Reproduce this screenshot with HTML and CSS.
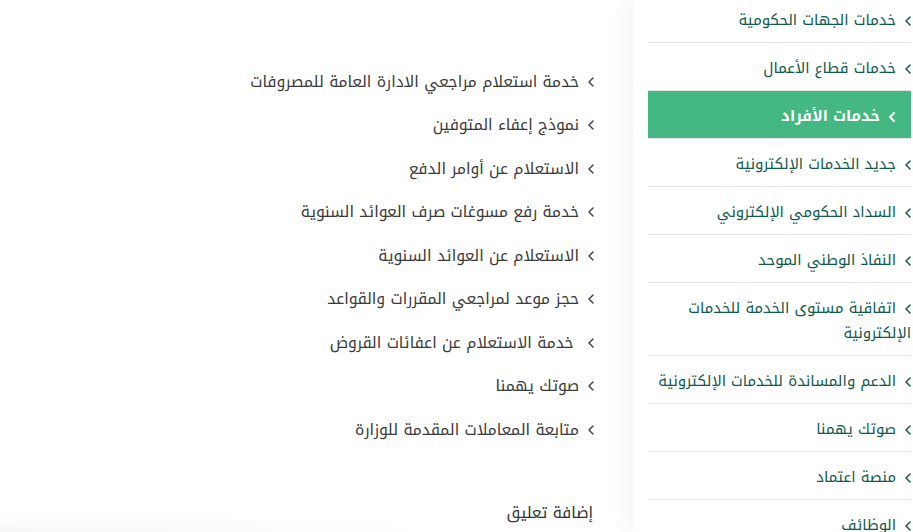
FILE: index.html
```html
<!DOCTYPE html>
<html lang="ar" dir="rtl">
<head>
<meta charset="utf-8">
<title>خدمات الأفراد</title>
<link rel="stylesheet" href="styles.css">
</head>
<body>
<div class="page">
  <aside class="sidebar">
    <ul class="side-menu">
      <li class="side-item"><svg class="chev" viewBox="0 0 6 10"><polyline points="5,1 1,5 5,9"/></svg>خدمات الجهات الحكومية</li>
      <li class="side-item"><svg class="chev" viewBox="0 0 6 10"><polyline points="5,1 1,5 5,9"/></svg>خدمات قطاع الأعمال</li>
      <li class="side-item active"><svg class="chev" viewBox="0 0 6 10"><polyline points="5,1 1,5 5,9"/></svg>خدمات الأفراد</li>
      <li class="side-item"><svg class="chev" viewBox="0 0 6 10"><polyline points="5,1 1,5 5,9"/></svg>جديد الخدمات الإلكترونية</li>
      <li class="side-item"><svg class="chev" viewBox="0 0 6 10"><polyline points="5,1 1,5 5,9"/></svg>السداد الحكومي الإلكتروني</li>
      <li class="side-item"><svg class="chev" viewBox="0 0 6 10"><polyline points="5,1 1,5 5,9"/></svg>النفاذ الوطني الموحد</li>
      <li class="side-item"><svg class="chev" viewBox="0 0 6 10"><polyline points="5,1 1,5 5,9"/></svg>اتفاقية مستوى الخدمة للخدمات الإلكترونية</li>
      <li class="side-item single"><svg class="chev" viewBox="0 0 6 10"><polyline points="5,1 1,5 5,9"/></svg>الدعم والمساندة للخدمات الإلكترونية</li>
      <li class="side-item"><svg class="chev" viewBox="0 0 6 10"><polyline points="5,1 1,5 5,9"/></svg>صوتك يهمنا</li>
      <li class="side-item"><svg class="chev" viewBox="0 0 6 10"><polyline points="5,1 1,5 5,9"/></svg>منصة اعتماد</li>
      <li class="side-item"><svg class="chev" viewBox="0 0 6 10"><polyline points="5,1 1,5 5,9"/></svg>الوظائف</li>
    </ul>
  </aside>
  <main class="content">
    <ul class="links">
      <li class="link-item"><svg class="chev" viewBox="0 0 6 10"><polyline points="5,1 1,5 5,9"/></svg><span>خدمة استعلام مراجعي الادارة العامة للمصروفات</span></li>
      <li class="link-item"><svg class="chev" viewBox="0 0 6 10"><polyline points="5,1 1,5 5,9"/></svg><span>نموذج إعفاء المتوفين</span></li>
      <li class="link-item"><svg class="chev" viewBox="0 0 6 10"><polyline points="5,1 1,5 5,9"/></svg><span>الاستعلام عن أوامر الدفع</span></li>
      <li class="link-item"><svg class="chev" viewBox="0 0 6 10"><polyline points="5,1 1,5 5,9"/></svg><span>خدمة رفع مسوغات صرف العوائد السنوية</span></li>
      <li class="link-item"><svg class="chev" viewBox="0 0 6 10"><polyline points="5,1 1,5 5,9"/></svg><span>الاستعلام عن العوائد السنوية</span></li>
      <li class="link-item"><svg class="chev" viewBox="0 0 6 10"><polyline points="5,1 1,5 5,9"/></svg><span>حجز موعد لمراجعي المقررات والقواعد</span></li>
      <li class="link-item"><svg class="chev" viewBox="0 0 6 10"><polyline points="5,1 1,5 5,9"/></svg><span>&nbsp;خدمة الاستعلام عن اعفائات القروض</span></li>
      <li class="link-item"><svg class="chev" viewBox="0 0 6 10"><polyline points="5,1 1,5 5,9"/></svg><span>صوتك يهمنا</span></li>
      <li class="link-item"><svg class="chev" viewBox="0 0 6 10"><polyline points="5,1 1,5 5,9"/></svg><span>متابعة المعاملات المقدمة للوزارة</span></li>
    </ul>
    <div class="comment">إضافة تعليق</div>
  </main>
</div>
</body>
</html>
```

FILE: styles.css
```css
* { box-sizing: border-box; }
html, body {
  margin: 0;
  padding: 0;
  background: #fff;
  overflow: hidden;
}
body {
  width: 913px;
  height: 532px;
  font-family: "Noto Kufi Arabic", "Droid Arabic Kufi", "DejaVu Sans", "Noto Sans", sans-serif;
  font-size: 15.7px;
}
.page {
  display: flex;
  flex-direction: row;
  height: 532px;
  overflow: hidden;
}
.sidebar {
  width: 280px;
  flex: 0 0 280px;
  padding: 0 2px 0 15px;
  background: #fff;
  box-shadow: -6px 0 22px rgba(0, 0, 0, 0.05);
  position: relative;
  z-index: 1;
}
.side-menu {
  list-style: none;
  margin: -5px 0 0 0;
  padding: 0;
}
.side-item {
  display: block;
  padding: 13px 0 9px 0;
  line-height: 25px;
  font-size: 15px;
  color: #0f5a4d;
  border-bottom: 1px solid #e4e4e4;
}
.side-item.single { white-space: nowrap; }
.side-item .chev {
  display: inline-block;
  width: 6px;
  height: 10px;
  margin-left: 9px;
  vertical-align: -1px;
  stroke: #0f5a4d;
}
.side-item.active {
  background: #43b883;
  color: #fff;
  font-weight: bold;
  padding-right: 16px;
}
.side-item.active .chev { stroke: #fff; stroke-width: 2; }
.chev {
  fill: none;
  stroke-width: 1.5;
  stroke-linecap: round;
  stroke-linejoin: round;
}
.content {
  flex: 1 1 auto;
  padding: 60px 39px 0 0;
  display: flex;
  flex-direction: column;
}
.links {
  list-style: none;
  margin: 0;
  padding: 0;
}
.link-item {
  display: flex;
  align-items: center;
  gap: 9px;
  padding: 9.75px 0;
  line-height: 24px;
  color: #3a3a3a;
}
.link-item .chev {
  flex: 0 0 6px;
  width: 6px;
  height: 10px;
  stroke: #444;
}
.comment {
  margin-top: 39px;
  padding: 10px 1px 20px 0;
  line-height: 24px;
  color: #333;
  background:
    linear-gradient(to right, rgba(255, 255, 255, 0) 0%, #fff 75%),
    linear-gradient(to bottom, #fff 0%, #fff 40%, #f1f1f1 100%);
  margin-left: -20px;
}
```
